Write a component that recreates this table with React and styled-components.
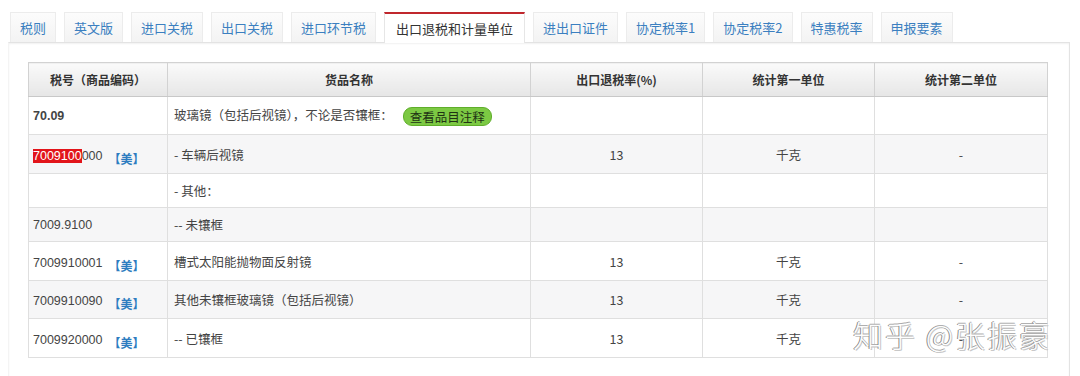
import React from "react";
import styled, { createGlobalStyle } from "styled-components";

const Global = createGlobalStyle`
  html, body { margin: 0; padding: 0; background: #fff; }
  body { font-family: "Liberation Sans", "Noto Sans CJK SC", sans-serif; color: #333; }
`;

const Page = styled.div`
  position: relative;
  width: 1080px;
  height: 376px;
  overflow: hidden;
  padding: 12px 0 0 8px;
  box-sizing: border-box;
`;

const TabBar = styled.div`
  display: flex;
  align-items: flex-end;
  gap: 8px;
  padding-left: 2px;
  height: 30px;
  width: 1061px;
  box-sizing: border-box;
  position: relative;
  z-index: 1;
`;

const Tab = styled.div`
  height: ${(p) => (p.$active ? "31px" : "30px")};
  margin-bottom: ${(p) => (p.$active ? "-1px" : "0")};
  box-sizing: border-box;
  padding: 0 ${(p) => (p.$active ? "11px" : "9px")};
  display: flex;
  align-items: center;
  font-size: 13px;
  font-family: "Noto Sans CJK SC", "Liberation Sans", sans-serif;
  color: ${(p) => (p.$active ? "#333" : "#3b7fc0")};
  background: ${(p) => (p.$active ? "#fff" : "linear-gradient(#fcfcfc, #f3f3f3)")};
  border: 1px solid ${(p) => (p.$active ? "#e6e6e6" : "#ececec")};
  border-top: ${(p) => (p.$active ? "2px solid #c0272d" : "1px solid #ececec")};
  border-bottom: none;
  white-space: nowrap;
`;

const Panel = styled.div`
  width: 1062px;
  box-sizing: border-box;
  border: 1px solid #e3e3e3;
  border-left-color: #f4f4f4;
  box-shadow: 0 1px 2px rgba(0, 0, 0, 0.06) inset;
  padding: 19px 21px 40px 19px;
`;

const Table = styled.table`
  border-collapse: collapse;
  width: 1019px;
  table-layout: fixed;
  font-size: 12px;
  font-family: "Liberation Sans", "Noto Sans CJK SC", sans-serif;
  border: 1px solid #dcdcdc;
`;

const Th = styled.th`
  height: 33px;
  padding: 0;
  font-weight: bold;
  font-size: 12px;
  color: #333;
  font-family: "Noto Sans CJK SC", sans-serif;
  background: linear-gradient(#fafafa, #e6e6e6);
  border: 1px solid #d2d2d2;
  border-bottom: 1px solid #c8c8c8;
  text-align: center;
`;

const Tr = styled.tr`
  background: ${(p) => (p.$alt ? "#f6f6f7" : "#fff")};
  height: ${(p) => p.$h}px;
`;

const Td = styled.td`
  border: 1px solid #dfdfdf;
  padding: 0 ${(p) => (p.$code ? "4px" : "6px")};
  text-align: ${(p) => (p.$center ? "center" : "left")};
  color: #444;
  font-size: 12.5px;
  font-weight: ${(p) => (p.$bold ? "bold" : "normal")};
  font-family: ${(p) =>
    p.$code ? '"Liberation Sans", "Noto Sans CJK SC", sans-serif' : '"Noto Sans CJK SC", "Liberation Sans", sans-serif'};
  white-space: nowrap;
`;

const Hl = styled.span`
  background: #e2141a;
  color: #fff;
`;

const Us = styled.a`
  display: inline-block;
  margin-left: 6px;
  position: relative;
  top: 4px;
  font-size: 12px;
  color: #2d7cc0;
  font-weight: bold;
  font-family: "Noto Sans CJK SC", sans-serif;
  text-decoration: none;
`;

const NoteBtn = styled.span`
  display: inline-block;
  margin-left: 10px;
  padding: 0 6px;
  height: 17px;
  line-height: 17px;
  border-radius: 9px;
  background: #7cc943;
  border: 1px solid #5fae2a;
  color: #213314;
  font-size: 12.5px;
  vertical-align: middle;
`;

const Watermark = styled.div`
  position: absolute;
  left: 853px;
  top: 312px;
  font-size: 30px;
  letter-spacing: 2px;
  font-family: "Noto Sans CJK SC", sans-serif;
  font-weight: 300;
  color: #fdfdfd;
  text-shadow: -1px 0 0 #8a8a8a, 0 -1px 0 #b0b0b0, 1px 1px 0 #c8c8c8;
  white-space: nowrap;
`;

const tabs = ["税则", "英文版", "进口关税", "出口关税", "进口环节税", "出口退税和计量单位", "进出口证件", "协定税率1", "协定税率2", "特惠税率", "申报要素"];

const Code = ({ value, hl, us }) => (
  <>
    {hl ? (
      <>
        <Hl>{value.slice(0, hl)}</Hl>
        {value.slice(hl)}
      </>
    ) : (
      value
    )}
    {us && <Us>【美】</Us>}
  </>
);

const rows = [
  { code: "70.09", bold: true, name: "玻璃镜（包括后视镜），不论是否镶框：", note: true, h: 38 },
  { code: "7009100000", hl: 7, us: true, name: "- 车辆后视镜", rate: "13", u1: "千克", u2: "-", h: 39 },
  { code: "", name: "- 其他：", h: 34 },
  { code: "7009.9100", name: "-- 未镶框", h: 34 },
  { code: "7009910001", us: true, name: "槽式太阳能抛物面反射镜", rate: "13", u1: "千克", u2: "-", h: 39 },
  { code: "7009910090", us: true, name: "其他未镶框玻璃镜（包括后视镜）", rate: "13", u1: "千克", u2: "-", h: 38 },
  { code: "7009920000", us: true, name: "-- 已镶框", rate: "13", u1: "千克", u2: "-", h: 39 },
];

export default function App() {
  return (
    <Page>
      <Global />
      <TabBar>
        {tabs.map((t) => (
          <Tab key={t} $active={t === "出口退税和计量单位"}>
            {t}
          </Tab>
        ))}
      </TabBar>
      <Panel>
        <Table>
          <colgroup>
            <col style={{ width: 139 }} />
            <col style={{ width: 363 }} />
            <col style={{ width: 172 }} />
            <col style={{ width: 172 }} />
            <col style={{ width: 173 }} />
          </colgroup>
          <thead>
            <tr>
              <Th>税号（商品编码）</Th>
              <Th>货品名称</Th>
              <Th>出口退税率(%)</Th>
              <Th>统计第一单位</Th>
              <Th>统计第二单位</Th>
            </tr>
          </thead>
          <tbody>
            {rows.map((r, i) => (
              <Tr key={i} $alt={i % 2 === 1} $h={r.h}>
                <Td $code $bold={r.bold}>
                  <Code value={r.code} hl={r.hl} us={r.us} />
                </Td>
                <Td>
                  {r.name}
                  {r.note && <NoteBtn>查看品目注释</NoteBtn>}
                </Td>
                <Td $center>{r.rate}</Td>
                <Td $center>{r.u1}</Td>
                <Td $center>{r.u2}</Td>
              </Tr>
            ))}
          </tbody>
        </Table>
      </Panel>
      <Watermark>知乎 @张振豪</Watermark>
    </Page>
  );
}
